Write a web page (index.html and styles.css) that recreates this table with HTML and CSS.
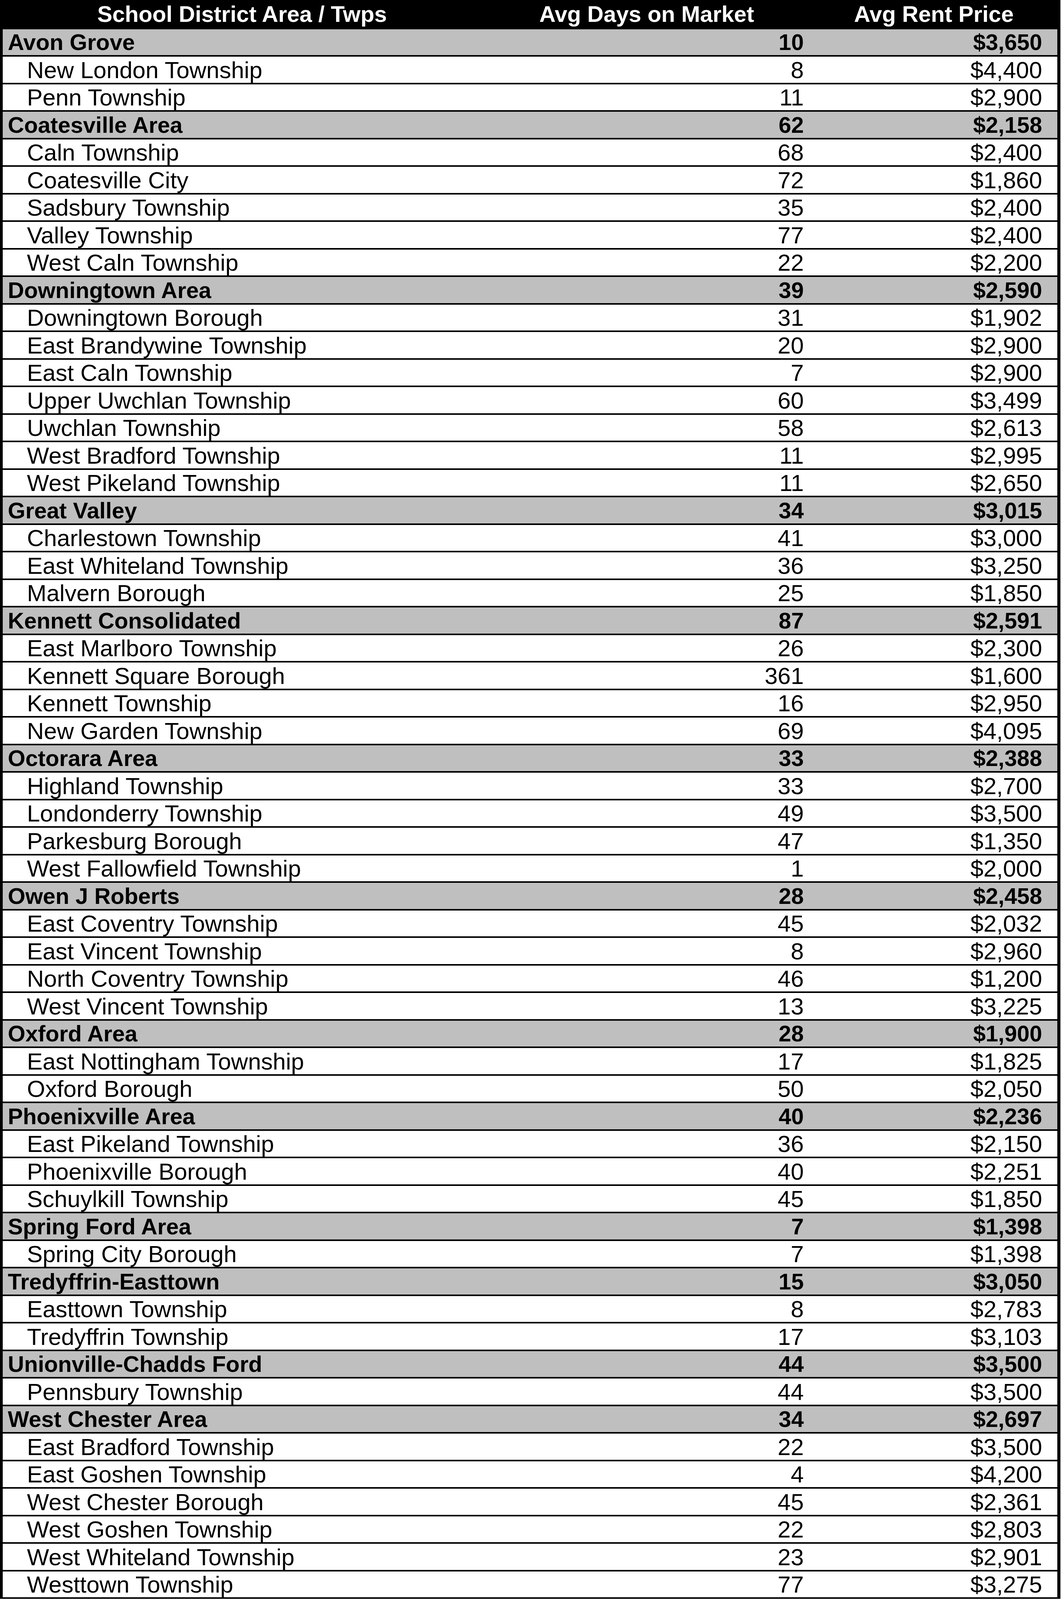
FILE: index.html
```html
<!DOCTYPE html>
<html lang="en">
<head>
<meta charset="utf-8">
<title>School District Rent Table</title>
<link rel="stylesheet" href="styles.css">
</head>
<body>
<div class="table">
  <div class="row head"><div class="c1">School District Area / Twps</div><div class="c2">Avg Days on Market</div><div class="c3">Avg Rent Price</div></div>

  <div class="row grp"><div class="c1">Avon Grove</div><div class="c2">10</div><div class="c3">$3,650</div></div>
  <div class="row sub"><div class="c1">New London Township</div><div class="c2">8</div><div class="c3">$4,400</div></div>
  <div class="row sub"><div class="c1">Penn Township</div><div class="c2">11</div><div class="c3">$2,900</div></div>

  <div class="row grp"><div class="c1">Coatesville Area</div><div class="c2">62</div><div class="c3">$2,158</div></div>
  <div class="row sub"><div class="c1">Caln Township</div><div class="c2">68</div><div class="c3">$2,400</div></div>
  <div class="row sub"><div class="c1">Coatesville City</div><div class="c2">72</div><div class="c3">$1,860</div></div>
  <div class="row sub"><div class="c1">Sadsbury Township</div><div class="c2">35</div><div class="c3">$2,400</div></div>
  <div class="row sub"><div class="c1">Valley Township</div><div class="c2">77</div><div class="c3">$2,400</div></div>
  <div class="row sub"><div class="c1">West Caln Township</div><div class="c2">22</div><div class="c3">$2,200</div></div>

  <div class="row grp"><div class="c1">Downingtown Area</div><div class="c2">39</div><div class="c3">$2,590</div></div>
  <div class="row sub"><div class="c1">Downingtown Borough</div><div class="c2">31</div><div class="c3">$1,902</div></div>
  <div class="row sub"><div class="c1">East Brandywine Township</div><div class="c2">20</div><div class="c3">$2,900</div></div>
  <div class="row sub"><div class="c1">East Caln Township</div><div class="c2">7</div><div class="c3">$2,900</div></div>
  <div class="row sub"><div class="c1">Upper Uwchlan Township</div><div class="c2">60</div><div class="c3">$3,499</div></div>
  <div class="row sub"><div class="c1">Uwchlan Township</div><div class="c2">58</div><div class="c3">$2,613</div></div>
  <div class="row sub"><div class="c1">West Bradford Township</div><div class="c2">11</div><div class="c3">$2,995</div></div>
  <div class="row sub"><div class="c1">West Pikeland Township</div><div class="c2">11</div><div class="c3">$2,650</div></div>

  <div class="row grp"><div class="c1">Great Valley</div><div class="c2">34</div><div class="c3">$3,015</div></div>
  <div class="row sub"><div class="c1">Charlestown Township</div><div class="c2">41</div><div class="c3">$3,000</div></div>
  <div class="row sub"><div class="c1">East Whiteland Township</div><div class="c2">36</div><div class="c3">$3,250</div></div>
  <div class="row sub"><div class="c1">Malvern Borough</div><div class="c2">25</div><div class="c3">$1,850</div></div>

  <div class="row grp"><div class="c1">Kennett Consolidated</div><div class="c2">87</div><div class="c3">$2,591</div></div>
  <div class="row sub"><div class="c1">East Marlboro Township</div><div class="c2">26</div><div class="c3">$2,300</div></div>
  <div class="row sub"><div class="c1">Kennett Square Borough</div><div class="c2">361</div><div class="c3">$1,600</div></div>
  <div class="row sub"><div class="c1">Kennett Township</div><div class="c2">16</div><div class="c3">$2,950</div></div>
  <div class="row sub"><div class="c1">New Garden Township</div><div class="c2">69</div><div class="c3">$4,095</div></div>

  <div class="row grp"><div class="c1">Octorara Area</div><div class="c2">33</div><div class="c3">$2,388</div></div>
  <div class="row sub"><div class="c1">Highland Township</div><div class="c2">33</div><div class="c3">$2,700</div></div>
  <div class="row sub"><div class="c1">Londonderry Township</div><div class="c2">49</div><div class="c3">$3,500</div></div>
  <div class="row sub"><div class="c1">Parkesburg Borough</div><div class="c2">47</div><div class="c3">$1,350</div></div>
  <div class="row sub"><div class="c1">West Fallowfield Township</div><div class="c2">1</div><div class="c3">$2,000</div></div>

  <div class="row grp"><div class="c1">Owen J Roberts</div><div class="c2">28</div><div class="c3">$2,458</div></div>
  <div class="row sub"><div class="c1">East Coventry Township</div><div class="c2">45</div><div class="c3">$2,032</div></div>
  <div class="row sub"><div class="c1">East Vincent Township</div><div class="c2">8</div><div class="c3">$2,960</div></div>
  <div class="row sub"><div class="c1">North Coventry Township</div><div class="c2">46</div><div class="c3">$1,200</div></div>
  <div class="row sub"><div class="c1">West Vincent Township</div><div class="c2">13</div><div class="c3">$3,225</div></div>

  <div class="row grp"><div class="c1">Oxford Area</div><div class="c2">28</div><div class="c3">$1,900</div></div>
  <div class="row sub"><div class="c1">East Nottingham Township</div><div class="c2">17</div><div class="c3">$1,825</div></div>
  <div class="row sub"><div class="c1">Oxford Borough</div><div class="c2">50</div><div class="c3">$2,050</div></div>

  <div class="row grp"><div class="c1">Phoenixville Area</div><div class="c2">40</div><div class="c3">$2,236</div></div>
  <div class="row sub"><div class="c1">East Pikeland Township</div><div class="c2">36</div><div class="c3">$2,150</div></div>
  <div class="row sub"><div class="c1">Phoenixville Borough</div><div class="c2">40</div><div class="c3">$2,251</div></div>
  <div class="row sub"><div class="c1">Schuylkill Township</div><div class="c2">45</div><div class="c3">$1,850</div></div>

  <div class="row grp"><div class="c1">Spring Ford Area</div><div class="c2">7</div><div class="c3">$1,398</div></div>
  <div class="row sub"><div class="c1">Spring City Borough</div><div class="c2">7</div><div class="c3">$1,398</div></div>

  <div class="row grp"><div class="c1">Tredyffrin-Easttown</div><div class="c2">15</div><div class="c3">$3,050</div></div>
  <div class="row sub"><div class="c1">Easttown Township</div><div class="c2">8</div><div class="c3">$2,783</div></div>
  <div class="row sub"><div class="c1">Tredyffrin Township</div><div class="c2">17</div><div class="c3">$3,103</div></div>

  <div class="row grp"><div class="c1">Unionville-Chadds Ford</div><div class="c2">44</div><div class="c3">$3,500</div></div>
  <div class="row sub"><div class="c1">Pennsbury Township</div><div class="c2">44</div><div class="c3">$3,500</div></div>

  <div class="row grp"><div class="c1">West Chester Area</div><div class="c2">34</div><div class="c3">$2,697</div></div>
  <div class="row sub"><div class="c1">East Bradford Township</div><div class="c2">22</div><div class="c3">$3,500</div></div>
  <div class="row sub"><div class="c1">East Goshen Township</div><div class="c2">4</div><div class="c3">$4,200</div></div>
  <div class="row sub"><div class="c1">West Chester Borough</div><div class="c2">45</div><div class="c3">$2,361</div></div>
  <div class="row sub"><div class="c1">West Goshen Township</div><div class="c2">22</div><div class="c3">$2,803</div></div>
  <div class="row sub"><div class="c1">West Whiteland Township</div><div class="c2">23</div><div class="c3">$2,901</div></div>
  <div class="row sub"><div class="c1">Westtown Township</div><div class="c2">77</div><div class="c3">$3,275</div></div>
</div>
</body>
</html>
```

FILE: styles.css
```css
/* The table fills the window height: at a 7300px tall window every
   row is 125.65px with 80px text, as in the reference; on a shorter
   window rows and text shrink so the whole table stays visible. */

html, body {
  margin: 0;
  padding: 0;
  background: #ffffff;
}

body {
  font-family: "Liberation Sans", Arial, sans-serif;
  color: #000000;
}

.table {
  width: 2714px;
  box-sizing: border-box;
  border-left: 7px solid #000000;
  border-right: 8px solid #000000;
  display: flex;
  flex-direction: column;
}

.row {
  display: grid;
  grid-template-columns: 1229px 838px 632px;
  box-sizing: border-box;
  height: 1.7212vh;
  border-bottom: max(3px, 0.1096vh) solid #000000;
  white-space: nowrap;
  line-height: 1;
}

.row > div {
  display: flex;
  align-items: center;
  padding-top: 0.055vh;
  box-sizing: border-box;
  min-height: 0;
}

.head {
  height: 1.822vh;
  border-bottom: 0;
  background: #000000;
  color: #ffffff;
  font-weight: bold;
  font-size: calc(33.14px + 0.6008vh);
}

.head > div {
  justify-content: center;
  padding-top: 0;
}

.head .c1 {
  padding-right: 4px;
}

.grp {
  background: #bfbfbf;
  font-weight: bold;
  font-size: calc(33.14px + 0.6008vh);
}

.sub {
  background: #ffffff;
  font-size: calc(34.43px + 0.6242vh);
}

.grp .c1 {
  padding-left: 13px;
}

.sub .c1 {
  padding-left: 62px;
}

.grp .c2,
.sub .c2 {
  justify-content: flex-end;
  padding-right: 17px;
}

.grp .c3,
.sub .c3 {
  justify-content: flex-end;
  padding-right: 39px;
}
```
